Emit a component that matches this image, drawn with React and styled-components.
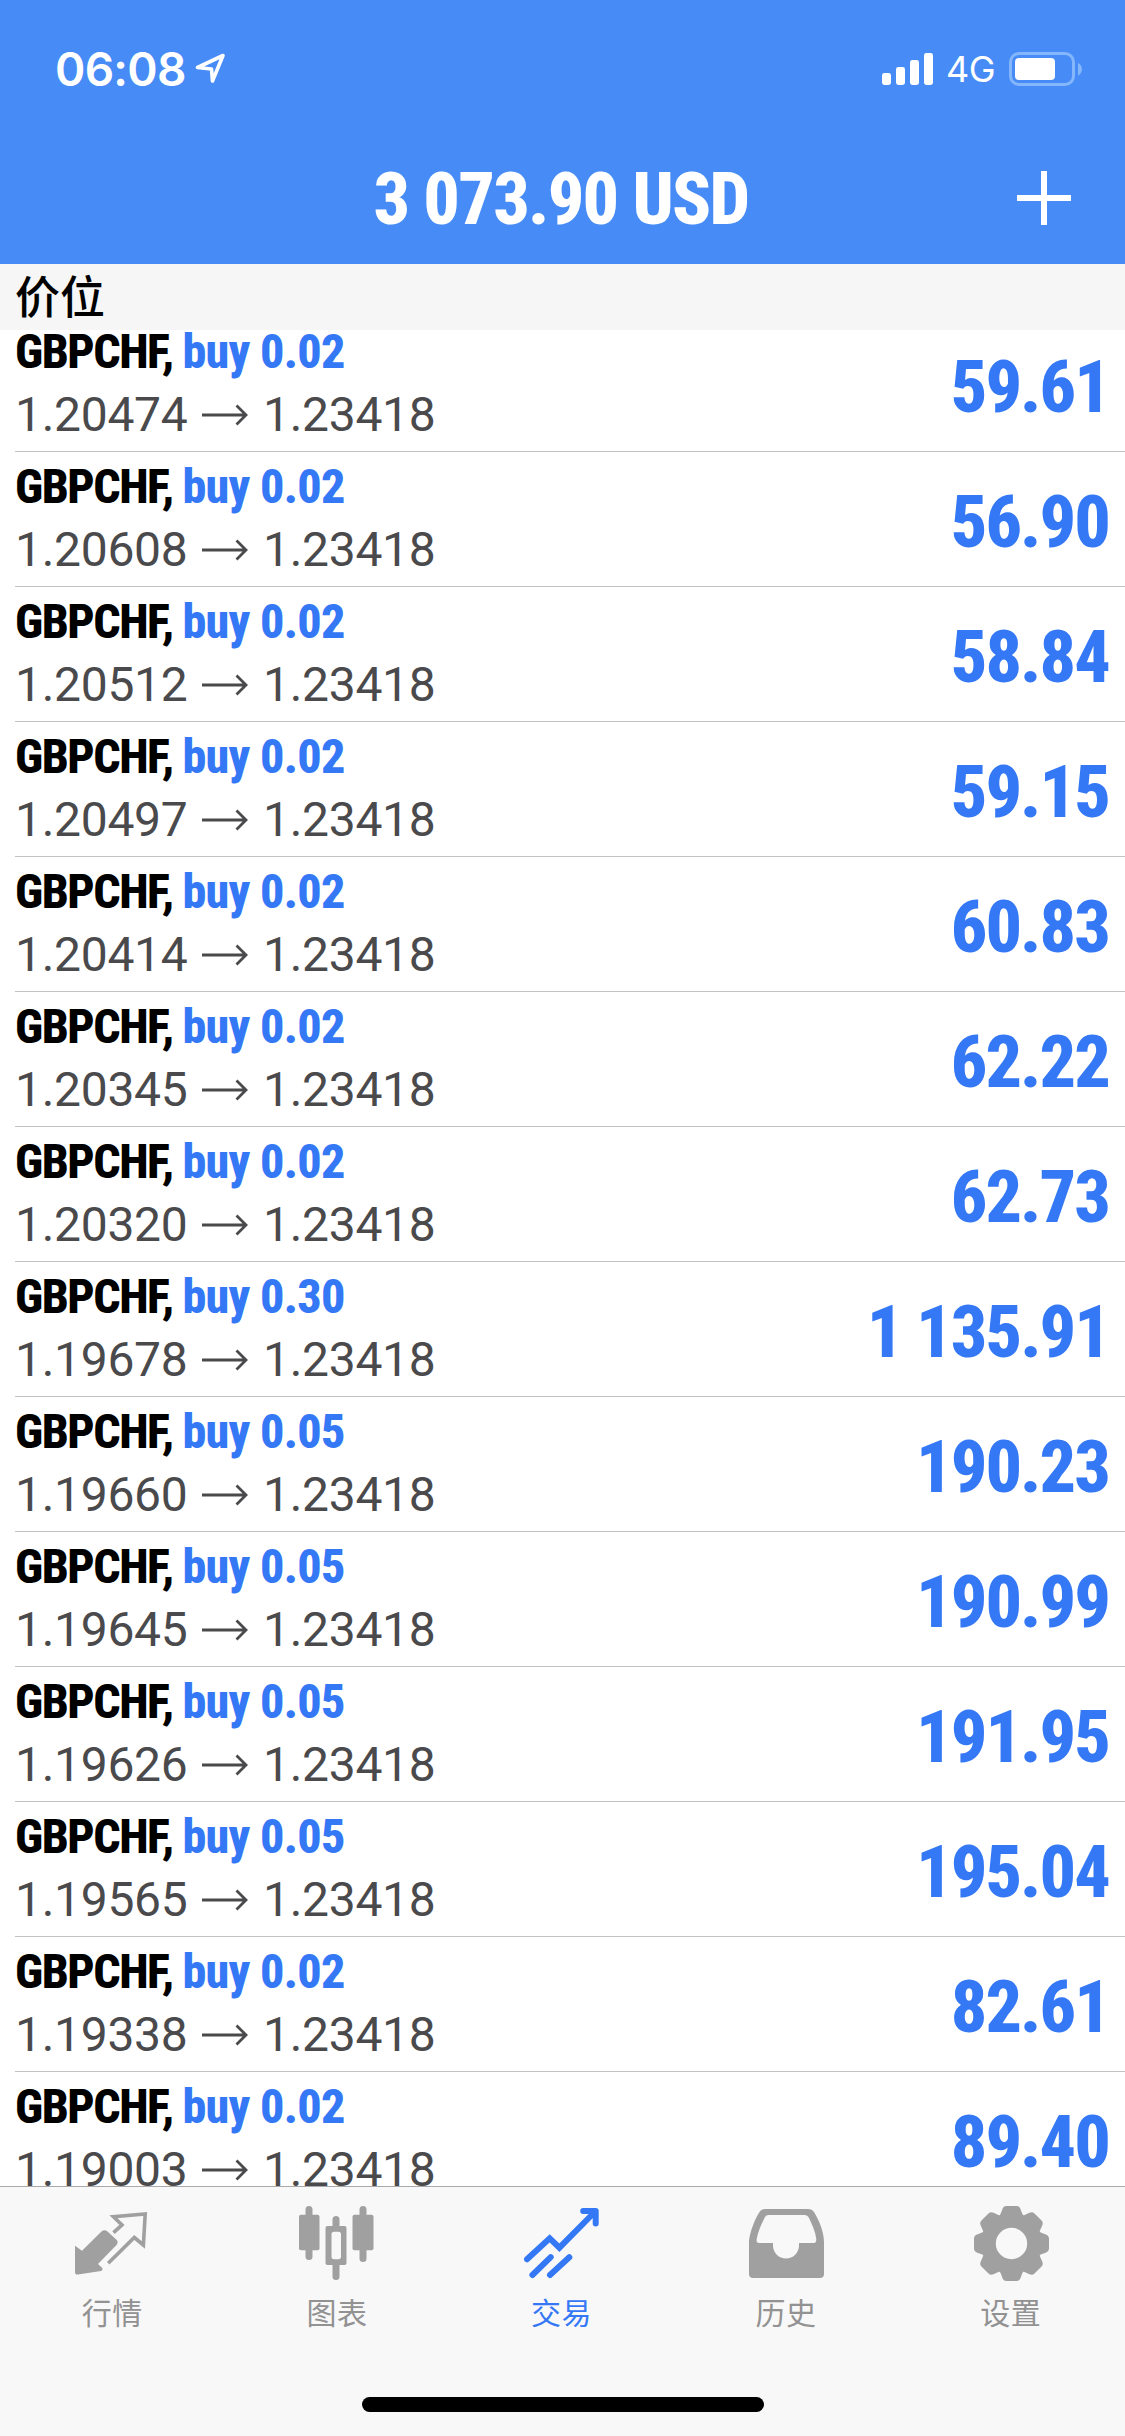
import styled, { createGlobalStyle } from "styled-components";

const GlobalStyle = createGlobalStyle`
  * {
    box-sizing: border-box;
  }

  body {
    margin: 0;
    background-color: #fff;
    font-family: Roboto, "Noto Sans CJK SC", sans-serif;
  }
`;

const Screen = styled.div`
  width: 1125px;
  height: 2436px;
  display: flex;
  flex-direction: column;
  overflow: hidden;
  background-color: #fff;
`;

const Header = styled.header`
  height: 264px;
  flex: none;
  background-color: #478cf6;
  color: #fff;
`;

const StatusBar = styled.div`
  height: 132px;
  padding: 5px 42px 0 55px;
  display: flex;
  align-items: center;
  justify-content: space-between;
`;

const StatusGroup = styled.div`
  display: flex;
  align-items: center;
`;

const Clock = styled.span`
  width: 140px;
  font-family: Inter, sans-serif;
  font-size: 46px;
  font-weight: 580;
  letter-spacing: -0.7px;
  line-height: 56px;
`;

const Network = styled.span`
  width: 63px;
  margin-left: 13px;
  font-family: Inter, sans-serif;
  font-size: 36px;
  line-height: 44px;
  letter-spacing: -0.6px;
`;

const TitleBar = styled.div`
  height: 132px;
  padding: 0 54px;
  display: grid;
  grid-template-columns: 54px 1fr 54px;
  align-items: center;
`;

const Balance = styled.h1`
  margin: 0;
  padding: 4px 3px 0 0;
  text-align: center;
  font-family: "Roboto Condensed", sans-serif;
  font-size: 72px;
  font-weight: 800;
  letter-spacing: -1.7px;
  line-height: 128px;
`;

const SectionHeader = styled.h2`
  height: 66px;
  flex: none;
  margin: 0;
  padding-left: 15px;
  background-color: #f6f6f6;
  color: #000;
  font-family: "Noto Sans CJK SC", sans-serif;
  font-size: 45px;
  font-weight: 500;
  line-height: 62px;
`;

const ListViewport = styled.main`
  flex: 1;
  min-height: 0;
  overflow: hidden;
`;

/* the list is scrolled a little under the section header */
const PositionList = styled.ul`
  list-style: none;
  margin: -13px 0 0;
  padding: 0 0 0 15px;
`;

const PositionRow = styled.li`
  height: 135px;
  padding-right: 16px;
  display: flex;
  justify-content: space-between;
  align-items: center;
  border-bottom: 1px solid #c2c2c4;
`;

const Details = styled.div`
  height: 100%;
  padding-top: 3px;
`;

const Deal = styled.div`
  font-family: "Roboto Condensed", sans-serif;
  font-size: 48px;
  font-weight: 800;
  letter-spacing: -1.5px;
  line-height: 63px;
  color: #000;
  white-space: nowrap;
`;

const Side = styled.span`
  letter-spacing: -0.7px;
  color: #3478f6;
`;

const Prices = styled.div`
  display: flex;
  align-items: center;
  gap: 15px;
  font-size: 48px;
  letter-spacing: -0.3px;
  line-height: 63px;
  color: #4a4a4d;
`;

const Price = styled.span`
  width: 172px;
`;

const Profit = styled.div`
  padding-top: 7px;
  font-family: "Roboto Condensed", sans-serif;
  font-size: 72px;
  font-weight: 800;
  letter-spacing: -1.9px;
  line-height: 84px;
  color: #3478f6;
`;

const TabBar = styled.nav`
  height: 250px;
  flex: none;
  display: flex;
  flex-direction: column;
  align-items: center;
  justify-content: space-between;
  padding-bottom: 24px;
  background-color: #f8f8f8;
  border-top: 1px solid #a9a9ab;
`;

const Tabs = styled.div`
  width: 100%;
  padding-right: 2px;
  display: grid;
  grid-template-columns: repeat(5, 1fr);
`;

const Tab = styled.div`
  padding-top: 19px;
  display: flex;
  flex-direction: column;
  align-items: center;
  color: ${(props) => (props.$active ? "#3478f6" : "#a0a0a0")};
`;

const TabLabel = styled.span`
  margin-top: 8px;
  font-family: "Noto Sans CJK SC", sans-serif;
  font-size: 30px;
  letter-spacing: 0.5px;
  line-height: 44px;
  color: ${(props) => (props.$active ? "#3478f6" : "#929292")};
`;

const HomeIndicator = styled.div`
  width: 402px;
  height: 15px;
  border-radius: 8px;
  background-color: #000;
`;

const LocationIcon = () => (
  <svg width="32" height="32" viewBox="0 0 32 32" fill="none">
    <path
      d="M2.5 14.5 L28 2.5 L17.5 28 L16.5 16 Z"
      stroke="#fff"
      strokeWidth="3.6"
      strokeLinejoin="round"
    />
  </svg>
);

const SignalIcon = () => (
  <svg width="51" height="32" viewBox="0 0 51 32" fill="#fff">
    <rect x="0" y="20" width="9" height="12" rx="2.4" />
    <rect x="14" y="14" width="9" height="18" rx="2.4" />
    <rect x="28" y="7" width="9" height="25" rx="2.4" />
    <rect x="42" y="0" width="9" height="32" rx="2.4" />
  </svg>
);

const BatteryIcon = () => (
  <svg width="74" height="34" viewBox="0 0 74 34">
    <rect
      x="1.5"
      y="1.5"
      width="63"
      height="31"
      rx="8.5"
      fill="none"
      stroke="#84b6fc"
      strokeWidth="3"
    />
    <rect x="6" y="6" width="40" height="22" rx="4" fill="#fff" />
    <path d="M69 11 C74.2 13 74.2 21.5 69 23.5 Z" fill="#84b6fc" />
  </svg>
);

const PlusIcon = () => (
  <svg width="54" height="54" viewBox="0 0 54 54" fill="#fff">
    <rect x="24" y="0" width="6" height="54" />
    <rect x="0" y="24" width="54" height="6" />
  </svg>
);

const ArrowIcon = () => (
  <svg width="46" height="24" viewBox="0 0 46 24" fill="none">
    <path
      d="M0 12 H44 M34.5 2.5 L44 12 L34.5 21.5"
      stroke="currentColor"
      strokeWidth="2.8"
    />
  </svg>
);

const QuotesIcon = () => (
  <svg width="75" height="75" viewBox="0 0 75 75">
    <path
      d="M0 39.7 L7 44.7 L26.5 25.5 Q29.5 23 32.5 25.5 L42 34.3 Q43.8 36.5 42 38.4 L23 58 L27.3 62 Q28 64.5 26 64.9 L3 68.6 Q0 68.8 0 66 Z"
      fill="currentColor"
    />
    <path
      d="M38.5 26.7 L47 18.9 L38.5 10.8 L70.2 8 L68.4 39 L59.3 31.5 L33.2 57.2"
      fill="none"
      stroke="currentColor"
      strokeWidth="3.6"
    />
  </svg>
);

const ChartsIcon = () => (
  <svg width="75" height="75" viewBox="-0.5 0 75 75" fill="currentColor">
    <rect x="-0.5" y="8.7" width="20.5" height="35.6" rx="2" />
    <rect x="6" y="0" width="7" height="54" rx="3.5" />
    <rect x="53" y="8.7" width="21" height="35.6" rx="2" />
    <rect x="60" y="0" width="7" height="56" rx="3.5" />
    <rect x="33" y="10" width="7" height="14" rx="3.5" />
    <rect x="33" y="56" width="7" height="18" rx="3.5" />
    <path
      fillRule="evenodd"
      d="M28 20 H45 Q47 20 47 22 V57 Q47 59 45 59 H28 Q26 59 26 57 V22 Q26 20 28 20 Z M34.5 25.7 Q32 25.7 32 28.5 V50.5 Q32 53.3 34.5 53.3 H39 Q41.5 53.3 41.5 50.5 V28.5 Q41.5 25.7 39 25.7 Z"
    />
  </svg>
);

const TradeIcon = () => (
  <svg
    width="75"
    height="75"
    viewBox="-0.7 0 75 75"
    fill="none"
    stroke="currentColor"
    strokeWidth="6"
  >
    <path d="M2.3 53.3 L25 32.3 L34.7 41.7 L70 6" strokeLinecap="round" />
    <path d="M58.5 5 H71 V17.5" strokeLinecap="round" strokeLinejoin="round" />
    <path d="M7.7 69 L26 51.2 M25.3 69 L44.6 51.2" strokeLinecap="round" />
  </svg>
);

const HistoryIcon = () => (
  <svg width="75" height="75" viewBox="-1 0 75 75" fill="currentColor">
    <path
      fillRule="evenodd"
      d="M-1 68 V35 C0 25 5 13 9.5 6 Q11 3 15 3 H58 Q62 3 64 6 C69 14 74 26 74 36 V68 Q74 72 70 72 H3 Q-1 72 -1 68 Z M9 37 Q6 37 6.7 33 C8 25 12 17 15 11 Q16 9 18.5 9 H54.5 Q57 9 58.5 11 C62 18 65.5 26 66.3 33 Q66.3 37 64 37 H49 V39.5 A13 13 0 0 1 23 39.5 V37 Z"
    />
  </svg>
);

const SettingsIcon = () => (
  <svg width="77" height="75" viewBox="-39.5 -37.5 77 75" fill="currentColor">
    <circle r="23" fill="none" stroke="currentColor" strokeWidth="14.6" />
    {[0, 45, 90, 135, 180, 225, 270, 315].map((angle) => (
      <path
        key={angle}
        d="M-13 -26 C-9 -31 -10 -37.5 -5 -37.5 H5 C10 -37.5 9 -31 13 -26 Z"
        transform={`rotate(${angle})`}
      />
    ))}
  </svg>
);

const positions = [
  { volume: "0.02", open: "1.20474", profit: "59.61" },
  { volume: "0.02", open: "1.20608", profit: "56.90" },
  { volume: "0.02", open: "1.20512", profit: "58.84" },
  { volume: "0.02", open: "1.20497", profit: "59.15" },
  { volume: "0.02", open: "1.20414", profit: "60.83" },
  { volume: "0.02", open: "1.20345", profit: "62.22" },
  { volume: "0.02", open: "1.20320", profit: "62.73" },
  { volume: "0.30", open: "1.19678", profit: "1 135.91" },
  { volume: "0.05", open: "1.19660", profit: "190.23" },
  { volume: "0.05", open: "1.19645", profit: "190.99" },
  { volume: "0.05", open: "1.19626", profit: "191.95" },
  { volume: "0.05", open: "1.19565", profit: "195.04" },
  { volume: "0.02", open: "1.19338", profit: "82.61" },
  { volume: "0.02", open: "1.19003", profit: "89.40" },
];

const tabs = [
  { label: "行情", Icon: QuotesIcon },
  { label: "图表", Icon: ChartsIcon },
  { label: "交易", Icon: TradeIcon, active: true },
  { label: "历史", Icon: HistoryIcon },
  { label: "设置", Icon: SettingsIcon },
];

const App = () => {
  return (
    <Screen>
      <GlobalStyle />
      <Header>
        <StatusBar>
          <StatusGroup>
            <Clock>06:08</Clock>
            <LocationIcon />
          </StatusGroup>
          <StatusGroup>
            <SignalIcon />
            <Network>4G</Network>
            <BatteryIcon />
          </StatusGroup>
        </StatusBar>
        <TitleBar>
          <span />
          <Balance>3 073.90 USD</Balance>
          <PlusIcon />
        </TitleBar>
      </Header>

      <SectionHeader>价位</SectionHeader>

      <ListViewport>
        <PositionList>
          {positions.map((position) => (
            <PositionRow key={position.open}>
              <Details>
                <Deal>
                  GBPCHF, <Side>buy {position.volume}</Side>
                </Deal>
                <Prices>
                  <Price>{position.open}</Price>
                  <ArrowIcon />
                  <Price>1.23418</Price>
                </Prices>
              </Details>
              <Profit>{position.profit}</Profit>
            </PositionRow>
          ))}
        </PositionList>
      </ListViewport>

      <TabBar>
        <Tabs>
          {tabs.map(({ label, Icon, active }) => (
            <Tab key={label} $active={active}>
              <Icon />
              <TabLabel $active={active}>{label}</TabLabel>
            </Tab>
          ))}
        </Tabs>
        <HomeIndicator />
      </TabBar>
    </Screen>
  );
};

export default App;
